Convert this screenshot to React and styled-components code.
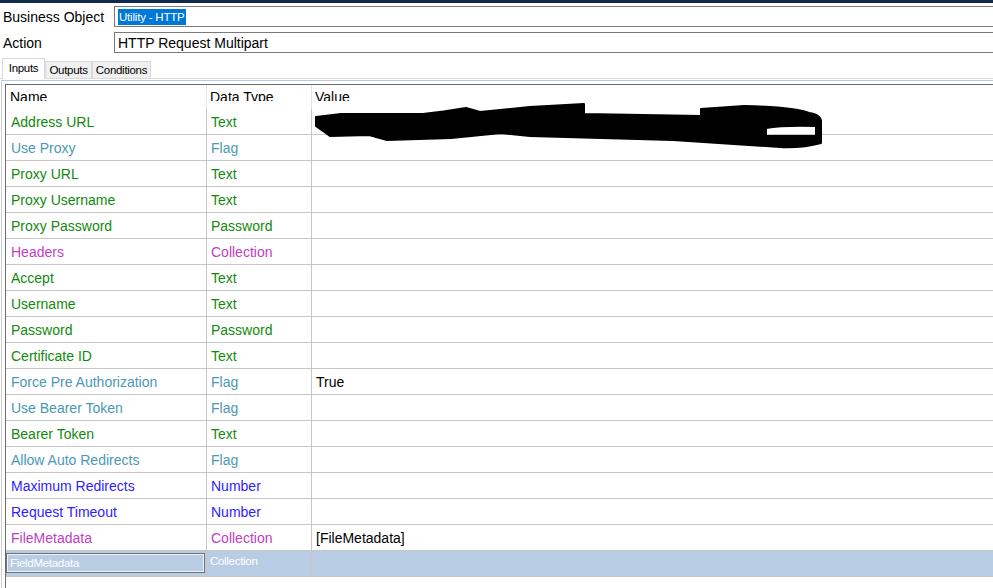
import React from 'react'
import styled, { createGlobalStyle } from 'styled-components'

const GlobalStyle = createGlobalStyle`
    body {
        margin: 0;
        background: #fff;
        font-family: "Liberation Sans", Arial, sans-serif;
        font-size: 14px;
        color: #000;
    }
`

const COLORS = {
    Text: '#118a0c',
    Password: '#118a0c',
    Flag: '#4b98b4',
    Collection: '#c03ec0',
    Number: '#2e1cff',
}

const rows = [
    { name: 'Address URL', type: 'Text', scribble: true },
    { name: 'Use Proxy', type: 'Flag' },
    { name: 'Proxy URL', type: 'Text' },
    { name: 'Proxy Username', type: 'Text' },
    { name: 'Proxy Password', type: 'Password' },
    { name: 'Headers', type: 'Collection' },
    { name: 'Accept', type: 'Text' },
    { name: 'Username', type: 'Text' },
    { name: 'Password', type: 'Password' },
    { name: 'Certificate ID', type: 'Text' },
    { name: 'Force Pre Authorization', type: 'Flag', value: 'True' },
    { name: 'Use Bearer Token', type: 'Flag' },
    { name: 'Bearer Token', type: 'Text' },
    { name: 'Allow Auto Redirects', type: 'Flag' },
    { name: 'Maximum Redirects', type: 'Number' },
    { name: 'Request Timeout', type: 'Number' },
    { name: 'FileMetadata', type: 'Collection', value: '[FileMetadata]' },
]

const Page = styled.div`
    height: 588px;
    display: flex;
    flex-direction: column;
    overflow: hidden;
`
const TopBar = styled.div`
    height: 3px;
    background: #11294b;
`
const Form = styled.div`
    display: flex;
    flex-direction: column;
    gap: 5px;
    margin-top: 3px;
`
const FieldRow = styled.div`
    display: flex;
    align-items: center;
    height: 21px;
`
const Label = styled.div`
    width: 111px;
    padding-left: 3px;
    white-space: nowrap;
`
const InputBox = styled.div`
    flex: 1;
    height: 21px;
    box-sizing: border-box;
    border: 1px solid #7a7a7a;
    border-right: none;
    padding: 1px 0 0 3px;
    display: flex;
    align-items: center;
`
const Selected = styled.span`
    background: #0078d7;
    color: #fff;
    font-size: 11.5px;
    line-height: 16px;
    padding: 0 1px;
    letter-spacing: -0.2px;
`
const TabStrip = styled.div`
    display: flex;
    align-items: flex-end;
    height: 20px;
    margin-top: 5px;
    padding-left: 2px;
    border-bottom: 1px solid #d9d9d9;
`
const Tab = styled.div`
    width: ${p => p.$w}px;
    box-sizing: border-box;
    height: ${p => (p.$active ? 21 : 17)}px;
    margin-bottom: ${p => (p.$active ? -1 : 0)}px;
    background: ${p => (p.$active ? '#fff' : '#f0f0f0')};
    border: 1px solid #d9d9d9;
    border-bottom: none;
    font-size: 11.5px;
    text-align: center;
    line-height: ${p => (p.$active ? 18 : 16)}px;
    letter-spacing: -0.3px;
    position: relative;
    z-index: ${p => (p.$active ? 1 : 0)};
`
const Panel = styled.div`
    flex: 1;
    margin: 1px 0 0 1px;
    border-top: 1px solid #b3c9e6;
    border-left: 1px solid #cfcfcf;
    padding: 3px 0 0 3px;
    display: flex;
    flex-direction: column;
`
const Grid = styled.div`
    flex: 1;
    border-top: 1px solid #6b6b6b;
    border-left: 1px solid #6b6b6b;
`
const Row = styled.div`
    display: grid;
    grid-template-columns: 201px 105px 1fr;
    height: ${p => (p.$header ? 24 : 26)}px;
    box-sizing: border-box;
    border-bottom: ${p => (p.$header ? 'none' : '1px solid #c6c6c6')};
    background: ${p => (p.$selected ? '#b8cce4' : 'transparent')};
`
const Cell = styled.div`
    box-sizing: border-box;
    border-right: 1px solid ${p => (p.$header ? '#e4e4e4' : '#c6c6c6')};
    padding-left: ${p => p.$pad}px;
    display: flex;
    align-items: center;
    color: ${p => p.$color || '#000'};
    white-space: nowrap;
    position: relative;
    &:last-child {
        border-right: none;
    }
`
const HeaderLabel = styled.span`
    display: block;
    align-self: flex-start;
    height: 16px;
    box-sizing: border-box;
    padding-top: 4px;
    line-height: 17px;
    overflow: hidden;
`
const Editor = styled.div`
    flex: 1;
    align-self: stretch;
    margin: 2px 1px 3px -4px;
    box-sizing: border-box;
    border: 1px solid #707070;
    box-shadow: inset 0 0 0 1px #eef3fa;
    color: #fff;
    font-size: 11.5px;
    padding-left: 3px;
    display: flex;
    align-items: center;
    letter-spacing: -0.3px;
`
const SmallType = styled.span`
    align-self: flex-start;
    padding-top: 4px;
    color: #fff;
    font-size: 11.5px;
    letter-spacing: -0.3px;
`
const Scribble = styled.svg`
    position: absolute;
    left: 1px;
    top: -8px;
`

const ScribbleMark = () => (
    <Scribble width="512" height="50" viewBox="0 0 512 50">
        <path
            fillRule="evenodd"
            fill="#000"
            stroke="#000"
            strokeWidth="2"
            strokeLinejoin="round"
            d="M3 16 L28 13 L110 13 Q130 11 153 7 L167 11 L217 6 L271 3 L271 13 L388 15 L388 8 L431 5 Q480 6 496 12 Q509 14 508 22 L508 42 Q490 47 467 46 L360 39 L217 35 L188 32 L138 37 L74 39 L56 34 L17 35 L3 25 Z M453 27 Q470 24 503 25 L503 35 L453 35 Z"
        />
    </Scribble>
)

export default function App() {
    return (
        <Page>
            <GlobalStyle />
            <TopBar />
            <Form>
                <FieldRow>
                    <Label>Business Object</Label>
                    <InputBox><Selected>Utility - HTTP</Selected></InputBox>
                </FieldRow>
                <FieldRow>
                    <Label>Action</Label>
                    <InputBox>HTTP Request Multipart</InputBox>
                </FieldRow>
            </Form>
            <TabStrip>
                <Tab $w={43} $active>Inputs</Tab>
                <Tab $w={47}>Outputs</Tab>
                <Tab $w={59}>Conditions</Tab>
            </TabStrip>
            <Panel>
                <Grid>
                    <Row $header>
                        <Cell $header $pad={4}><HeaderLabel>Name</HeaderLabel></Cell>
                        <Cell $header $pad={3}><HeaderLabel>Data Type</HeaderLabel></Cell>
                        <Cell $header $pad={3}><HeaderLabel>Value</HeaderLabel></Cell>
                    </Row>
                    {rows.map(r => (
                        <Row key={r.name}>
                            <Cell $pad={5} $color={COLORS[r.type]}>{r.name}</Cell>
                            <Cell $pad={4} $color={COLORS[r.type]}>{r.type}</Cell>
                            <Cell $pad={4}>
                                {r.value}
                                {r.scribble && <ScribbleMark />}
                            </Cell>
                        </Row>
                    ))}
                    <Row $selected>
                        <Cell $pad={4}><Editor>FieldMetadata</Editor></Cell>
                        <Cell $pad={3}><SmallType>Collection</SmallType></Cell>
                        <Cell $pad={4} />
                    </Row>
                </Grid>
            </Panel>
        </Page>
    )
}
